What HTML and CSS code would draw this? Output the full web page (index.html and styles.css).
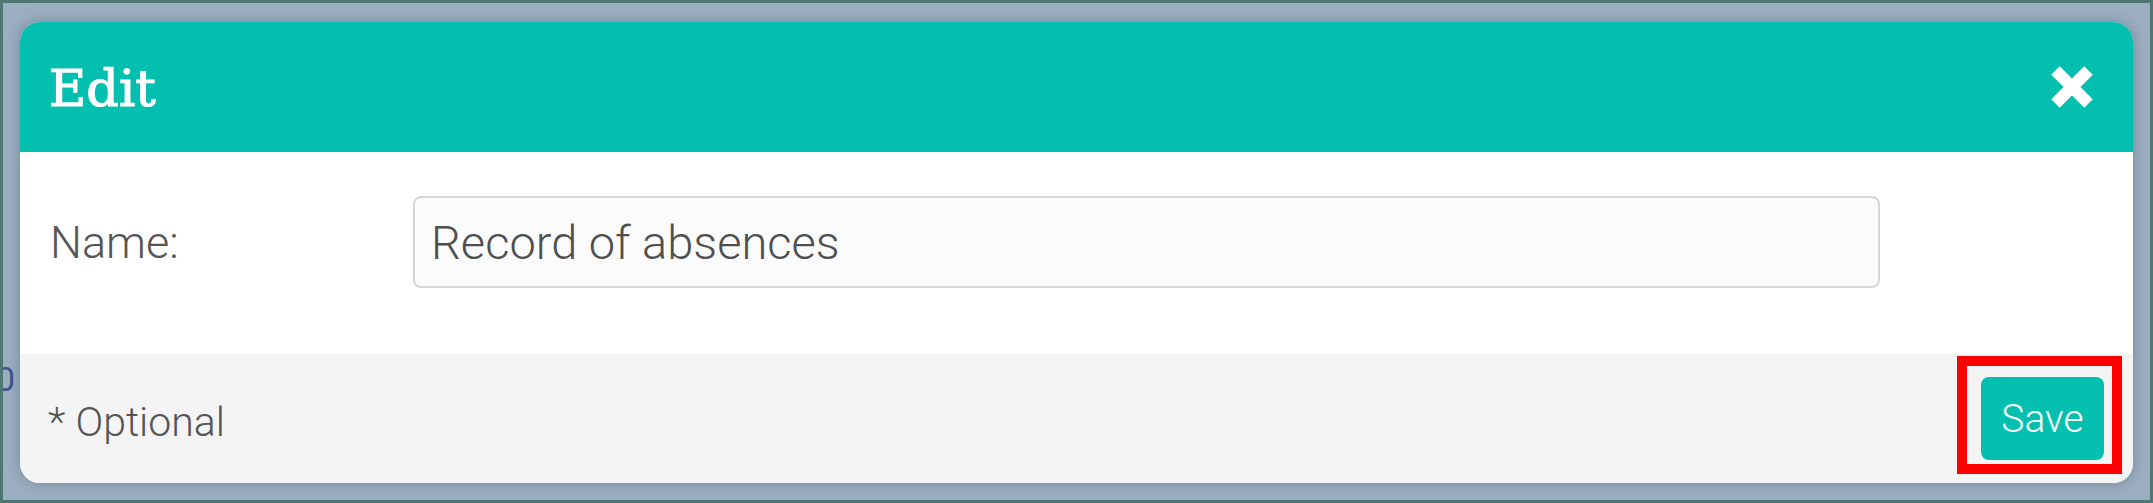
FILE: index.html
```html
<!DOCTYPE html>
<html lang="en">
<head>
<meta charset="utf-8">
<title>Edit</title>
<link rel="stylesheet" href="styles.css">
</head>
<body>
<div class="frame">
  <span class="peek">0</span>
  <div class="modal">
    <div class="modal-header">
      <h1 class="modal-title">Edit</h1>
      <button class="close" aria-label="Close">
        <svg width="42" height="42" viewBox="0 0 42 42"><path d="M4.5 4.5 L37.5 37.5 M37.5 4.5 L4.5 37.5" stroke="#fff" stroke-width="12" stroke-linecap="butt" fill="none"/></svg>
      </button>
    </div>
    <div class="modal-body">
      <label class="field-label" for="name">Name:</label>
      <input class="field-input" id="name" type="text" value="Record of absences">
    </div>
    <div class="modal-footer">
      <span class="optional">* Optional</span>
      <div class="save-wrap">
        <button class="save">Save</button>
        <span class="highlight"></span>
      </div>
    </div>
  </div>
</div>
</body>
</html>
```
FILE: styles.css
```css
* { box-sizing: border-box; }
html, body { margin: 0; padding: 0; }
body {
  width: 2153px;
  height: 503px;
  font-family: Roboto, "Liberation Sans", sans-serif;
  overflow: hidden;
}
.frame {
  position: relative;
  width: 2153px;
  height: 503px;
  border: 3px solid #4e7673;
  background: #9cafc1;
  padding: 19px 17px 17px 17px;
  overflow: hidden;
}
.peek {
  position: absolute;
  left: -7px;
  top: 356px;
  font-size: 34px;
  color: #3d568f;
  font-family: Roboto, sans-serif;
}
.modal {
  position: relative;
  width: 2113px;
  height: 461px;
  border-radius: 20px;
  overflow: hidden;
  background: #fff;
  display: flex;
  flex-direction: column;
  box-shadow: 0 0 14px rgba(40, 60, 80, 0.35);
}
.modal-header {
  height: 130px;
  background: #02bfb0;
  display: flex;
  align-items: center;
  justify-content: space-between;
  padding: 0 40px 0 29px;
}
.modal-title {
  margin: 0;
  color: #fff;
  font-family: "DejaVu Serif", serif;
  font-weight: 400;
  font-size: 51px;
  line-height: 1;
  padding-top: 2px;
  -webkit-text-stroke: 1.2px #fff;
}
.close {
  border: 0;
  background: none;
  padding: 0;
  width: 42px;
  height: 42px;
  display: block;
}
.close svg { display: block; }
.modal-body {
  height: 202px;
  display: flex;
  align-items: center;
  padding: 0 30px 22px 30px;
}
.field-label {
  width: 363px;
  flex: none;
  font-size: 45px;
  font-weight: 300;
  color: #555;
}
.field-input {
  width: 1467px;
  height: 92px;
  border: 2px solid #d6d6d6;
  border-radius: 8px;
  background: #fbfbfb;
  font-family: Roboto, sans-serif;
  font-size: 47px;
  font-weight: 300;
  color: #4f4f4f;
  padding: 0 16px;
  outline: none;
}
.modal-footer {
  flex: 1;
  background: #f4f4f4;
  display: flex;
  align-items: center;
  justify-content: space-between;
  padding: 0 29px 0 28px;
}
.optional {
  font-size: 41px;
  font-weight: 300;
  color: #555;
  padding-top: 6px;
}
.save-wrap { position: relative; }
.save {
  display: block;
  width: 123px;
  height: 83px;
  border: 0;
  border-radius: 8px;
  background: #02bfb0;
  color: #f2fffd;
  font-family: Roboto, sans-serif;
  font-size: 39px;
  font-weight: 300;
  padding: 0;
}
.highlight {
  position: absolute;
  left: -24px;
  top: -21px;
  width: 165px;
  height: 118px;
  border: 10px solid #ff0000;
  pointer-events: none;
}
```
